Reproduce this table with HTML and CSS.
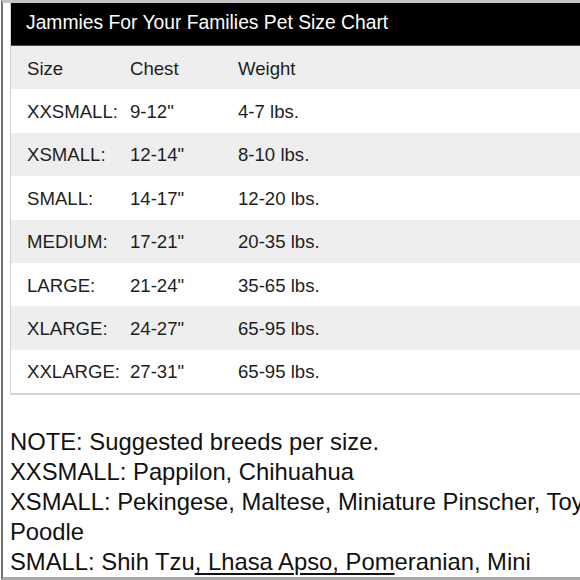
FILE: index.html
```html
<!DOCTYPE html>
<html>
<head>
<meta charset="utf-8">
<link rel="stylesheet" href="styles.css">
</head>
<body>
<div class="frame">
  <div class="chart">
    <div class="title">Jammies For Your Families Pet Size Chart</div>
    <div class="row head"><span>Size</span><span>Chest</span><span>Weight</span></div>
    <div class="row"><span>XXSMALL:</span><span>9-12"</span><span>4-7 lbs.</span></div>
    <div class="row alt"><span>XSMALL:</span><span>12-14"</span><span>8-10 lbs.</span></div>
    <div class="row"><span>SMALL:</span><span>14-17"</span><span>12-20 lbs.</span></div>
    <div class="row alt"><span>MEDIUM:</span><span>17-21"</span><span>20-35 lbs.</span></div>
    <div class="row"><span>LARGE:</span><span>21-24"</span><span>35-65 lbs.</span></div>
    <div class="row alt"><span>XLARGE:</span><span>24-27"</span><span>65-95 lbs.</span></div>
    <div class="row last"><span>XXLARGE:</span><span>27-31"</span><span>65-95 lbs.</span></div>
  </div>
  <div class="notes">
    <div class="line">NOTE: Suggested breeds per size.</div>
    <div class="line">XXSMALL: Pappilon, Chihuahua</div>
    <div class="line">XSMALL: Pekingese, Maltese, Miniature Pinscher, Toy</div>
    <div class="line">Poodle</div>
    <div class="line">SMALL: Shih Tzu<span class="mark">, Lhasa Apso, Pom</span>eranian, Mini</div>
  </div>
</div>
</body>
</html>
```
FILE: styles.css
```css
html, body {
  margin: 0;
  padding: 0;
  background: #ffffff;
  overflow: hidden;
}
body {
  width: 580px;
  height: 580px;
  font-family: "Liberation Sans", Arial, sans-serif;
}
.frame {
  box-sizing: border-box;
  width: 580px;
  height: 580px;
  margin-left: 1px;
  border-top: 3px solid #c4c4c4;
  border-left: 2px solid #707070;
  border-bottom: 3px solid #a8a8a8;
  padding-left: 7px;
  overflow: hidden;
}
.chart {
  width: 620px;
  border-left: 1px solid #cfcfcf;
  border-bottom: 2px solid #d4d4d4;
}
.title {
  box-sizing: border-box;
  height: 43px;
  background: #000000;
  color: #ffffff;
  font-size: 19.3px;
  padding: 9px 0 0 15px;
  border-bottom: 1px solid #4a4a4a;
  white-space: nowrap;
}
.row {
  display: grid;
  grid-template-columns: 103px 108px 1fr;
  align-items: center;
  height: 43.4px;
  padding-left: 16px;
  padding-top: 2px;
  box-sizing: border-box;
  font-size: 18.6px;
  color: #1e1e1e;
  background: #ffffff;
  white-space: nowrap;
}
.row.head, .row.alt {
  background: #eeeeee;
}
.notes {
  margin-top: 32px;
  width: 620px;
  font-size: 23.8px;
  line-height: 30px;
  color: #111111;
}
.line {
  white-space: nowrap;
}
.mark {
  text-decoration: underline;
  text-decoration-thickness: 2px;
  text-underline-offset: 3px;
}
```
